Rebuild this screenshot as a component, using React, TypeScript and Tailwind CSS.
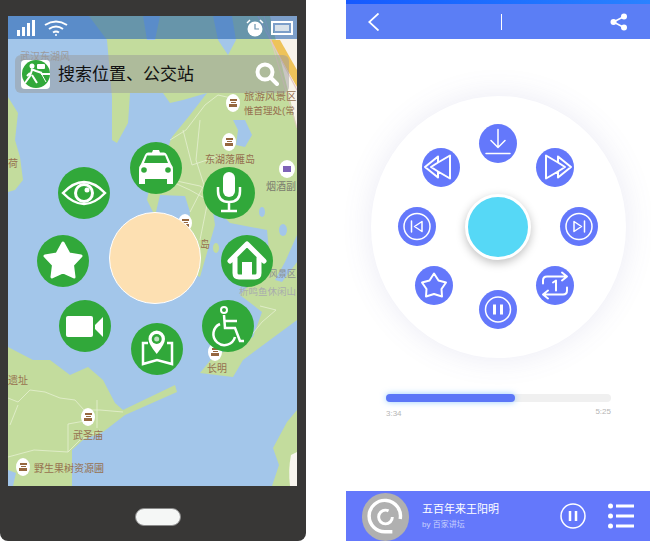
import type { ReactNode } from "react";

const cjk = "font-['Liberation_Sans','Noto_Sans_CJK_SC',sans-serif]";
const brown = "text-[10px] text-[#96704f]";

function GreenBtn({ className, children }: { className: string; children: ReactNode }) {
  return (
    <div className={`absolute flex h-[52px] w-[52px] items-center justify-center rounded-full bg-[#31a83a] ${className}`}>
      <svg viewBox="0 0 52 52" className="h-[52px] w-[52px]">{children}</svg>
    </div>
  );
}

function BlueBtn({ className, children }: { className: string; children: ReactNode }) {
  return (
    <div className={`absolute h-[39px] w-[38px] rounded-[50%] bg-[#6478fb] ${className}`}>
      <svg viewBox="0 0 38 38" className="h-[39px] w-[38px]" fill="none" stroke="#fff" strokeWidth="1.5" strokeLinejoin="round" strokeLinecap="round">
        {children}
      </svg>
    </div>
  );
}

function Pin({ className }: { className: string }) {
  return (
    <div className={`absolute flex h-[18px] w-[14px] flex-col items-center justify-center gap-[1px] rounded-[50%] bg-white ${className}`}>
      <div className="h-[2px] w-[7px] bg-[#96683f]" />
      <div className="h-[1px] w-[5px] bg-[#96683f]" />
      <div className="h-[3px] w-[8px] bg-[#96683f]" />
    </div>
  );
}

function MapLabel({ className, children }: { className: string; children: ReactNode }) {
  return <span className={`absolute whitespace-nowrap leading-none ${className}`}>{children}</span>;
}

function MapArt() {
  return (
    <svg viewBox="8 16 289 470" className="absolute inset-0 h-[470px] w-[289px]">
      <rect x="8" y="16" width="289" height="470" fill="#a3c6ea" />
      <g fill="#c3dc9d">
        {/* top and right land */}
        <path d="M89 16 L107 40 L112 97 L112 140 L117 143 L128 123 L130 93 L163 93 L170 103 L183 100 L207 93 L190 115 L172 137 L166 152 L172 165 L150 185 L147 200 L155 216 L160 195 L185 196 L190 212 L185 270 L200 277 L215 225 L212 205 L230 223 L267 230 L270 262 L240 295 L262 312 L253 337 L213 357 L200 373 L233 377 L243 360 L297 320 L297 16 Z" />
        {/* left strip */}
        <path d="M8 97 L18 113 L15 140 L20 157 L23 180 L15 190 L8 192 Z" />
        {/* bottom left land */}
        <path d="M8 347 L33 360 L50 360 L70 375 L88 367 L103 380 L115 403 L123 410 L175 385 L177 392 L125 415 L103 432 L83 440 L72 450 L72 486 L8 486 Z" />
        {/* bottom right land */}
        <path d="M297 410 L287 422 L273 448 L279 465 L272 486 L297 486 Z" />
        <ellipse cx="216" cy="248" rx="3" ry="5" />
      </g>
      <g fill="#a3c6ea">
        <path d="M233 120 L245 120 L252 135 L245 147 L236 145 L238 130 Z" />
        <path d="M143 16 L160 16 L155 40 L147 40 Z" />
        <path d="M213 16 L232 16 L236 40 L228 55 L218 40 Z" />
        <path d="M297 235 L285 262 L275 280 L282 282 L297 262 Z" />
        <ellipse cx="262" cy="212" rx="3" ry="5" />
        <ellipse cx="283" cy="230" rx="4" ry="6" />
        <path d="M8 470 L16 473 L13 486 L8 486 Z" />
      </g>
      <path d="M270 16 L297 16 L297 128 Z" fill="#f8f3ea" />
      <path d="M270 40 L280 40 L297 70 L297 87 Z" fill="#eec35a" />
      <path d="M291 455 L297 452 L297 486 L290 486 Q288 470 291 455Z" fill="#f8f5ee" />
      <g fill="none" stroke="#e4c6c6" strokeWidth="1.2">
        <path d="M258 16 L297 90" />
        <path d="M264 16 L297 128" opacity="0.7" />
      </g>
      <g fill="none" stroke="#e6f0d2" strokeWidth="0.8">
        <path d="M170 140 L186 130 L205 105 L218 95 L240 100" />
        <path d="M200 120 L196 160 L204 185 L190 212" />
        <path d="M183 130 L192 165 L222 155" />
        <path d="M168 180 L190 190 L208 200 L200 240" />
        <path d="M8 398 L18 402 L30 390 L45 392 L60 398 L75 400 L84 410 L100 410 L123 412" />
        <path d="M10 425 L18 405" />
        <path d="M8 457 L34 450 L68 452 L80 440 L100 430" />
        <path d="M68 452 L68 424 L90 420" />
        <path d="M97 400 L97 428" />
        <path d="M260 306 L276 310 L262 322 L250 337" />
        <path d="M172 180 L200 186 L216 196" />
      </g>
    </svg>
  );
}

function Phone() {
  return (
    <div className="flex h-[541px] w-[306px] shrink-0 flex-col rounded-b-[8px] bg-[#383736] pl-2 pt-4">
      <div className={`relative h-[470px] w-[289px] overflow-hidden ${cjk}`}>
        <MapArt />
        <MapLabel className={`left-[12px] top-[36px] opacity-50 ${brown}`}>武汉东湖风</MapLabel>
        <MapLabel className="left-[236px] top-[75px] text-[10.5px] text-[#96704f]">旅游风景区</MapLabel>
        <MapLabel className="left-[236px] top-[90px] text-[9.5px] text-[#96704f]">惟首理处(常</MapLabel>
        <MapLabel className={`left-[197px] top-[139px] ${brown}`}>东湖落雁岛</MapLabel>
        <MapLabel className="left-[258px] top-[166px] text-[10px] text-[#7b7b6e]">烟酒副</MapLabel>
        <MapLabel className={`left-[192px] top-[224px] ${brown}`}>岛</MapLabel>
        <MapLabel className="left-[261px] top-[254px] text-[9px] text-[#8b8f8f]">风景区</MapLabel>
        <MapLabel className="left-[231px] top-[271px] text-[9.5px] text-[#a9adad]">析鸣鱼休闲山</MapLabel>
        <MapLabel className={`left-[199px] top-[348px] ${brown}`}>长明</MapLabel>
        <MapLabel className={`left-0 top-[360px] ${brown}`}>遗址</MapLabel>
        <MapLabel className={`left-[65px] top-[415px] ${brown}`}>武圣庙</MapLabel>
        <MapLabel className={`left-[26px] top-[448px] ${brown}`}>野生果树资源圃</MapLabel>
        <MapLabel className={`left-0 top-[143px] ${brown}`}>荷</MapLabel>
        <Pin className="left-[218px] top-[78px]" />
        <Pin className="left-[214px] top-[117px]" />
        <Pin className="left-[73px] top-[392px]" />
        <Pin className="left-[8px] top-[442px]" />
        <Pin className="left-[200px] top-[327px]" />
        <Pin className="left-[170px] top-[198px]" />
        <div className="absolute left-[271px] top-[144px] h-[18px] w-[16px] rounded-[50%] bg-white">
          <div className="mx-auto mt-[6px] h-[6px] w-[8px] bg-[#7f63b8]" />
        </div>

        {/* status bar */}
        <div className="absolute inset-x-0 top-0 flex h-[23px] items-center justify-between bg-[#2965b2]/60 pl-[9px] pr-[4px]">
          <div className="flex items-center gap-[8px]">
            <svg viewBox="0 0 19 16" className="h-4 w-[19px]" fill="#fff">
              <rect x="0" y="10" width="3" height="6" />
              <rect x="5" y="7" width="3" height="9" />
              <rect x="10" y="3" width="3" height="13" />
              <rect x="15" y="0" width="3" height="16" />
            </svg>
            <svg viewBox="0 0 24 16" className="h-4 w-6" fill="none" stroke="#fff" strokeWidth="2">
              <path d="M1 5 Q12 -2 23 5" />
              <path d="M5 9 Q12 4 19 9" />
              <path d="M9 12.5 Q12 10.5 15 12.5" />
              <circle cx="12" cy="15" r="1" fill="#fff" stroke="none" />
            </svg>
          </div>
          <div className="flex items-center gap-[7px]">
            <svg viewBox="0 0 18 18" className="h-[18px] w-[18px]">
              <circle cx="9" cy="10" r="7.5" fill="#fff" />
              <path d="M9 5 V10 H13" fill="none" stroke="#6d93ad" strokeWidth="1.2" />
              <path d="M1 4 L4 1 M14 1 L17 4" stroke="#fff" strokeWidth="1.5" />
            </svg>
            <div className="flex h-[14px] w-[22px] items-center border-2 border-white p-[2px]">
              <div className="h-full w-[14px] bg-[#d9e2ea]" />
            </div>
          </div>
        </div>

        {/* search */}
        <div className="absolute left-[7px] top-[39px] flex h-[38px] w-[274px] items-center rounded-[6px] bg-[#9a9a9a]/50 pl-[6px] pr-[10px]">
          <div className="flex h-[29px] w-[29px] items-center justify-center rounded-[4px] bg-white">
            <svg viewBox="0 0 28 28" className="h-7 w-7">
              <circle cx="14" cy="14" r="14" fill="#31a83a" />
              <circle cx="10" cy="6" r="2.5" fill="#fff" />
              <path d="M9 9 L14 11 L20 13 M10 10 L8 16 L3 23 M10 15 L15 23 M8 13 L5 16" fill="none" stroke="#fff" strokeWidth="2" />
              <rect x="15" y="4" width="8" height="5" rx="1" fill="#fff" />
              <path d="M19 13 L24 22" stroke="#fff" strokeWidth="1" />
              <rect x="19" y="13" width="9" height="2" fill="#fff" />
            </svg>
          </div>
          <span className="ml-[8px] flex-1 whitespace-nowrap text-[17px] leading-none text-[#111]">搜索位置、公交站</span>
          <svg viewBox="0 0 24 24" className="h-6 w-6" fill="none" stroke="#fff" strokeWidth="4">
            <circle cx="10" cy="10" r="7.5" />
            <path d="M15.5 15.5 L22 22" strokeLinecap="round" />
          </svg>
        </div>

        {/* radial menu */}
        <div className="absolute left-[101px] top-[196px] h-[92px] w-[92px] rounded-full border-[1.5px] border-white bg-[#fde0b2]" />
        <GreenBtn className="left-[122px] top-[126px]">
          <path d="M22 10.5 L23 8 H29 L30 10.5 H34 Q36 10.5 37 13 L41 22 Q43 24 43 28 V42 H37 V37 H15 V42 H9 V28 Q9 24 11 22 L15 13 Q16 10.5 18 10.5 Z" fill="#fff" />
          <path d="M17 13.5 H35 L38 21 H14 Z" fill="#31a83a" />
          <circle cx="14" cy="28" r="2.8" fill="#31a83a" />
          <circle cx="38" cy="28" r="2.8" fill="#31a83a" />
        </GreenBtn>
        <GreenBtn className="left-[50px] top-[151px]">
          <path d="M5 26 Q26 4 47 26 Q26 48 5 26Z" fill="none" stroke="#fff" strokeWidth="2.5" />
          <circle cx="26" cy="26" r="10" fill="#fff" />
          <circle cx="26" cy="26" r="7" fill="#31a83a" />
          <circle cx="29" cy="23" r="2.5" fill="#fff" />
        </GreenBtn>
        <GreenBtn className="left-[195px] top-[151px]">
          <rect x="20" y="5" width="12" height="25" rx="6" fill="#fff" />
          <path d="M15 20 V24 Q15 35 26 35 Q37 35 37 24 V20 M26 35 V43 M18 44 H34" fill="none" stroke="#fff" strokeWidth="2.5" />
        </GreenBtn>
        <GreenBtn className="left-[29px] top-[219px]">
          <path d="M26 8 L32 19 L44 21 L35.5 30 L37 42 L26 37 L15 42 L16.5 30 L8 21 L20 19 Z" fill="#fff" stroke="#fff" strokeWidth="3" strokeLinejoin="round" />
        </GreenBtn>
        <GreenBtn className="left-[213px] top-[219px]">
          <path d="M9 26 L26 9 L43 26 M14 23 V38 Q14 42 18 42 H34 Q38 42 38 38 V23" fill="none" stroke="#fff" strokeWidth="5" strokeLinecap="round" strokeLinejoin="round" />
          <rect x="21" y="27" width="10" height="15" fill="#fff" />
        </GreenBtn>
        <GreenBtn className="left-[51px] top-[284px]">
          <rect x="7" y="16" width="27" height="21" rx="2" fill="#fff" />
          <path d="M36 25 L44 17 V37 L36 29 Z" fill="#fff" />
        </GreenBtn>
        <GreenBtn className="left-[194px] top-[284px]">
          <circle cx="22" cy="10" r="3" fill="none" stroke="#fff" strokeWidth="2" />
          <path d="M22 15 L23 28 H33 L38 41 H42 M23 21 H35" fill="none" stroke="#fff" strokeWidth="2.5" />
          <path d="M18 24 A11 11 0 1 0 33 37" fill="none" stroke="#fff" strokeWidth="2.5" />
        </GreenBtn>
        <GreenBtn className="left-[123px] top-[307px]">
          <path d="M25.7 7.5 A8.5 8.5 0 0 1 34 16 Q34 21 25.7 31 Q17.5 21 17.5 16 A8.5 8.5 0 0 1 25.7 7.5 Z" fill="#fff" />
          <circle cx="25.7" cy="16" r="5" fill="#31a83a" />
          <circle cx="25.7" cy="16" r="2.5" fill="#bfe3c1" />
          <path d="M17 20 H12 V41 L26 37 L41 41 V20 H36" fill="none" stroke="#fff" strokeWidth="2.5" />
        </GreenBtn>
      </div>
      <div className="ml-[127px] mt-[22px] h-[18px] w-[46px] rounded-full border border-[#8a8a8a] bg-[#f5f7f6]" />
    </div>
  );
}

function Player() {
  return (
    <div className={`flex h-[541px] w-[304px] shrink-0 flex-col ${cjk}`}>
      <div className="h-[4px] bg-gradient-to-r from-[#1659ff] to-[#2a82ff]" />
      <div className="flex h-[35px] items-center justify-between bg-[#5b7ef5] pl-[22px] pr-[22px]">
        <svg viewBox="0 0 11 18" className="h-[18px] w-[11px]" fill="none" stroke="#fff" strokeWidth="1.8">
          <path d="M10.5 0.5 L1.2 9 L10.5 17.5" />
        </svg>
        <div className="ml-[14px] h-[16px] w-[1.5px] bg-white" />
        <svg viewBox="0 0 18 18" className="h-[18px] w-[18px]" fill="#fff">
          <circle cx="14" cy="3.5" r="3" />
          <circle cx="14" cy="14.5" r="3" />
          <circle cx="3.5" cy="9" r="3" />
          <path d="M3.5 9 L14 3.5 M3.5 9 L14 14.5" stroke="#fff" strokeWidth="1.5" />
        </svg>
      </div>

      <div className="relative ml-[25px] mt-[57px] h-[262px] w-[255px] rounded-[50%] bg-white shadow-[0_0_30px_rgba(90,90,170,0.13)]">
        <div className="absolute left-[94px] top-[98px] h-[66px] w-[66px] rounded-full border-[3px] border-white bg-[#56d8f6] shadow-[0_3px_10px_rgba(0,0,0,0.25)]" />
        <BlueBtn className="left-[108px] top-[28px]">
          <path d="M19 5 V22 M12 16 L19 23 L26 16 M7 29 H31" />
        </BlueBtn>
        <BlueBtn className="left-[51px] top-[52px]">
          <path d="M3 18.5 L16 8 V14 L28 7 V30 L16 23 V29 Z M16 14 L9 18.5 L16 23" strokeWidth="2" />
        </BlueBtn>
        <BlueBtn className="left-[165px] top-[52px]">
          <path d="M35 18.5 L22 8 V14 L10 7 V30 L22 23 V29 Z M22 14 L29 18.5 L22 23" strokeWidth="2" />
        </BlueBtn>
        <BlueBtn className="left-[27px] top-[111px]">
          <circle cx="19" cy="19" r="13" />
          <path d="M13.5 13.5 V24.5 M24 14 L16.5 19 L24 24 Z" />
        </BlueBtn>
        <BlueBtn className="left-[189px] top-[111px]">
          <circle cx="19" cy="19" r="13" />
          <path d="M24.5 13.5 V24.5 M14 14 L21.5 19 L14 24 Z" />
        </BlueBtn>
        <BlueBtn className="left-[44px] top-[170px]">
          <path d="M19 7 L23.5 14 L31 16 L26.5 22.5 L27 30 L19 27.5 L11 30 L11.5 22.5 L7 16 L14.5 14 Z" strokeWidth="2" />
        </BlueBtn>
        <BlueBtn className="left-[165px] top-[170px]">
          <path d="M7 17 V14 Q7 10 11 10 H30 M26 6 L31 10 L26 14 M31 21 V24 Q31 28 27 28 H8 M12 24 L7 28 L12 32" strokeWidth="2" />
          <path d="M17 16 L20 14 V24" strokeWidth="2" />
        </BlueBtn>
        <BlueBtn className="left-[108px] top-[194px]">
          <circle cx="19" cy="19" r="12.5" />
          <path d="M15.5 14 V24 M22.5 14 V24" strokeWidth="3" strokeLinecap="butt" />
        </BlueBtn>
      </div>

      <div className="ml-[40px] mt-[36px] w-[225px]">
        <div className="h-[8px] rounded-full bg-[#f0f0f0]">
          <div className="h-[8px] w-[129px] rounded-full bg-[#5b76f7] shadow-[0_0_6px_rgba(80,170,255,0.6)]" />
        </div>
        <div className="flex justify-between text-[8px] leading-none text-[#b5b5b5]">
          <span className="mt-[8px]">3:34</span>
          <span className="mt-[6px]">5:25</span>
        </div>
      </div>

      <div className="mt-auto flex h-[50px] items-center bg-[#6478fb] pl-[16px] pr-[16px]">
        <div className="mt-[2px] h-[48px] w-[47px] shrink-0 rounded-full bg-[#b0b0b0]">
          <svg viewBox="0 0 48 48" className="h-12 w-[47px]" fill="none" stroke="#fff" strokeWidth="3.5">
            <path d="M31 39 H24 A16 16 0 1 1 39 26" />
            <circle cx="24" cy="24" r="7" strokeWidth="3" strokeDasharray="36 8" />
          </svg>
        </div>
        <div className="ml-[13px] flex-1">
          <div className="text-[11px] leading-[14px] text-white">五百年来王阳明</div>
          <div className="mt-[4px] text-[8px] leading-[10px] text-[#c9d1fd]">by 百家讲坛</div>
        </div>
        <svg viewBox="0 0 26 26" className="mr-[22px] h-[26px] w-[26px]" fill="none" stroke="#fff">
          <circle cx="13" cy="13" r="12" strokeWidth="1.5" />
          <path d="M10 8 V18 M16 8 V18" strokeWidth="2.5" />
        </svg>
        <svg viewBox="0 0 26 26" className="h-[26px] w-[26px]" fill="#fff">
          <circle cx="2.5" cy="3" r="2.5" />
          <circle cx="2.5" cy="13" r="2.5" />
          <circle cx="2.5" cy="23" r="2.5" />
          <rect x="8" y="1.5" width="18" height="3" />
          <rect x="8" y="11.5" width="18" height="3" />
          <rect x="8" y="21.5" width="18" height="3" />
        </svg>
      </div>
    </div>
  );
}

export default function App() {
  return (
    <div className="flex h-[541px] w-[651px] gap-[40px] overflow-hidden bg-white">
      <Phone />
      <Player />
    </div>
  );
}
